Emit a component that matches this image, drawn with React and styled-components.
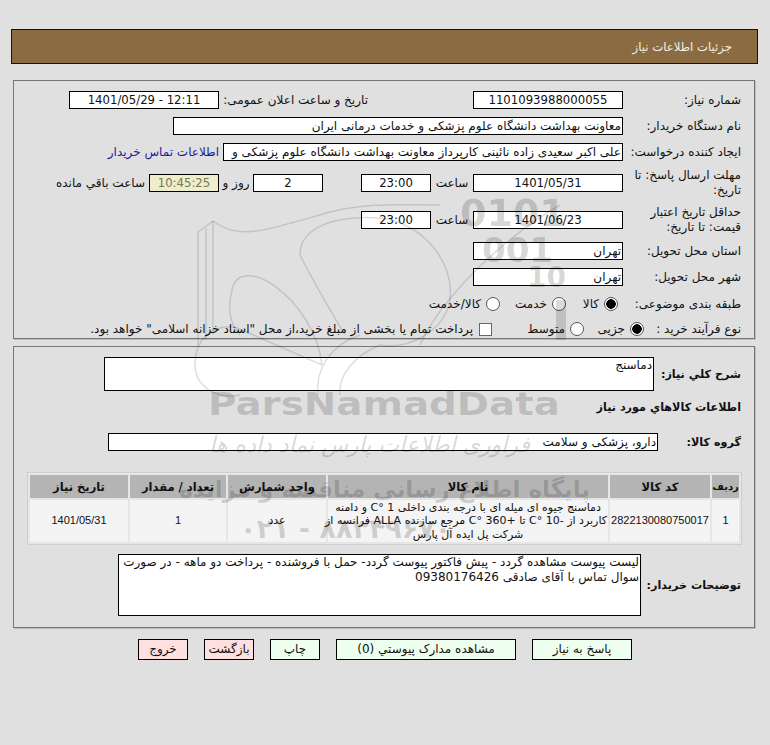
import React from 'react';
import styled, { createGlobalStyle } from 'styled-components';

const GlobalStyle = createGlobalStyle`
  html, body {
    margin: 0;
    background: #e0e0e0;
  }
  body {
    font-family: "DejaVu Sans", sans-serif;
    font-size: 12px;
    color: #111;
  }
`;

const Page = styled.div`
  position: relative;
  width: 770px;
  height: 745px;
  padding: 29px 12px 0 0;
  box-sizing: border-box;
  overflow: hidden;
  direction: rtl;
`;

const Header = styled.div`
  width: 747px;
  height: 35px;
  box-sizing: border-box;
  display: flex;
  align-items: center;
  padding-right: 25px;
  background: #8b6c42;
  border: 1px solid #1a1208;
  color: #f2efe8;
  font-size: 11.7px;
`;

const Panel = styled.div`
  width: 742px;
  height: ${p => p.$h}px;
  margin: ${p => p.$top}px 3px 0 0;
  box-sizing: border-box;
  padding: 10px 13px 0 0;
  border: 1px solid #757575;
  box-shadow: 1px 1px 0 #bdbdbd;
  display: flex;
  flex-direction: column;
`;

const Row = styled.div`
  display: flex;
  align-items: center;
  min-height: 18px;
  margin-top: ${p => p.$top || 0}px;
`;

const Label = styled.div`
  width: ${p => p.$w || 118}px;
  flex: none;
  line-height: 15px;
`;

const BoldLabel = styled(Label)`
  font-weight: 700;
  font-size: 11.2px;
  white-space: nowrap;
`;

const Field = styled.div`
  width: ${p => p.$w}px;
  height: ${p => p.$h || 18}px;
  flex: none;
  box-sizing: border-box;
  margin-right: ${p => p.$mr || 0}px;
  background: ${p => p.$bg || '#fff'};
  border: 1px solid #000;
  color: ${p => p.$color || '#111'};
  text-align: ${p => p.$align || 'center'};
  padding: 0 1px;
  line-height: ${p => (p.$h ? 15 : 16)}px;
  font-size: ${p => (p.$num ? 11.7 : 12)}px;
  white-space: ${p => (p.$wrap ? 'normal' : 'nowrap')};
  overflow: hidden;
`;

const Inline = styled.div`
  width: ${p => p.$w}px;
  flex: none;
  text-align: ${p => p.$align || 'center'};
  margin-right: ${p => p.$mr || 0}px;
  white-space: nowrap;
`;

const BuyerLink = styled.a`
  margin-right: 4px;
  color: #1a1a9c;
  white-space: nowrap;
`;

const Option = styled.div`
  display: flex;
  align-items: center;
  gap: 5px;
  width: ${p => p.$w}px;
  flex: none;
  white-space: nowrap;
`;

const Radio = styled.span`
  width: 14px;
  height: 14px;
  flex: none;
  box-sizing: border-box;
  border-radius: 50%;
  border: 1px solid #555;
  background: ${p => (p.$on ? 'radial-gradient(circle, #000 0 4.5px, #fff 5px)' : '#fff')};
`;

const Check = styled.span`
  width: 13px;
  height: 13px;
  flex: none;
  box-sizing: border-box;
  border: 1px solid #666;
  background: #fff;
  margin-left: 1px;
`;

const Title = styled.div`
  font-weight: 700;
  font-size: 11.2px;
  height: 18px;
  line-height: 18px;
  margin-top: ${p => p.$top}px;
`;

const ItemsTable = styled.table`
  width: 715px;
  margin: ${p => p.$top}px 0 0 0;
  table-layout: fixed;
  border-collapse: separate;
  border-spacing: 2px;
  border: 1px solid #cfcfcf;
  background: #e6e6e6;
  position: relative;
  left: 1px;
`;

const Th = styled.th`
  width: ${p => p.$w}px;
  height: 23px;
  padding: 0;
  background: #b4b4b4;
  font-weight: 700;
  font-size: ${p => p.$size || 11.5}px;
`;

const Td = styled.td`
  height: 42px;
  padding: 0 1px;
  background: #f4f4f4;
  text-align: center;
  line-height: 13.5px;
  font-size: 11px;
  white-space: nowrap;
`;

const NumTd = styled(Td)`
  font-family: "Liberation Sans", sans-serif;
`;

const Buttons = styled.div`
  margin: 11px 126px 0 0;
  display: flex;
  gap: 16px;
`;

const Button = styled.div`
  width: ${p => p.$w}px;
  height: 21px;
  box-sizing: border-box;
  border: 1px solid #000;
  background: ${p => (p.$danger ? '#ffe0e0' : '#efffef')};
  text-align: center;
  line-height: 19px;
`;

const Watermark = styled.svg`
  position: absolute;
  left: 0;
  top: 0;
  pointer-events: none;
  direction: ltr;
`;

const WatermarkText = styled.text`
  fill: #000;
  fill-opacity: 0.17;
  font-family: "DejaVu Sans", sans-serif;
  font-weight: ${p => p.$weight || 700};
  font-size: ${p => p.$size}px;
  font-style: ${p => (p.$italic ? 'italic' : 'normal')};
`;

const Logo = () => (
  <Watermark width="770" height="745" viewBox="0 0 770 745">
    <g fill="none" stroke="#000" strokeOpacity="0.13" strokeWidth="1.5">
      <path d="M213 221 C240 240 260 232 330 212 C370 202 400 205 440 205" />
      <path d="M198 232 L198 345 M206 228 L206 340 M213 221 L213 335" />
      <path d="M198 232 L213 221" />
      <path d="M300 255 C300 225 340 215 380 218 C420 222 455 260 450 300 C445 330 410 350 380 345" />
      <path d="M300 255 C310 275 330 310 345 335" />
      <path d="M322 365 L235 327 C210 325 195 340 195 365 C195 385 215 400 240 395" />
      <path d="M322 365 C315 300 240 250 232 290 C225 315 235 330 240 335" />
      <path d="M360 335 C330 345 315 370 318 395 M380 345 C355 355 338 375 340 395" />
      <path d="M560 205 C500 240 440 300 420 345" />
    </g>
    <WatermarkText x="460" y="226" $size={38}>0101</WatermarkText>
    <WatermarkText x="482" y="262" $size={34}>001</WatermarkText>
    <WatermarkText x="527" y="287" $size={28}>10</WatermarkText>
    <rect x="556" y="300" width="10" height="40" fill="#000" fillOpacity="0.14" />
    <WatermarkText x="208" y="415" $size={32} textLength="352" lengthAdjust="spacingAndGlyphs">ParsNamadData</WatermarkText>
    <WatermarkText x="530" y="452" $size={22} $weight={400} $italic direction="rtl">فراوری اطلاعات پارس نماد داده ها</WatermarkText>
    <WatermarkText x="590" y="497" $size={23} direction="rtl">پایگاه اطلاع رسانی مناقصه و مزایده</WatermarkText>
    <WatermarkText x="240" y="538" $size={27}>۰۲۱ - ۸۸۳۴۹۶۷۰</WatermarkText>
  </Watermark>
);

export default function App() {
  return (
    <Page>
      <GlobalStyle />
      <Header>جزئیات اطلاعات نیاز</Header>

      <Panel $h={259} $top={16}>
        <Row>
          <Label>شماره نیاز:</Label>
          <Field $w={150} $num>1101093988000055</Field>
          <Inline $w={149} $mr={105} $align="right">تاریخ و ساعت اعلان عمومی:</Inline>
          <Field $w={150} $num>12:11 - 1401/05/29</Field>
        </Row>
        <Row $top={8}>
          <Label>نام دستگاه خریدار:</Label>
          <Field $w={450} $align="right">معاونت بهداشت دانشگاه علوم پزشکی و خدمات درمانی ایران</Field>
        </Row>
        <Row $top={8}>
          <Label>ایجاد کننده درخواست:</Label>
          <Field $w={400} $align="right">علی اکبر سعیدی زاده نائینی کارپرداز معاونت بهداشت دانشگاه علوم پزشکی و</Field>
          <BuyerLink>اطلاعات تماس خریدار</BuyerLink>
        </Row>
        <Row $top={11}>
          <Label>مهلت ارسال پاسخ: تا تاریخ:</Label>
          <Field $w={150} $num>1401/05/31</Field>
          <Inline $w={42}>ساعت</Inline>
          <Field $w={70} $num>23:00</Field>
          <Field $w={70} $mr={38} $num>2</Field>
          <Inline $w={34}>روز و</Inline>
          <Field $w={70} $bg="#eeeecc" $color="#77775a" $num>10:45:25</Field>
          <Inline $w={96} $mr={4} $align="right">ساعت باقي مانده</Inline>
        </Row>
        <Row $top={14}>
          <Label>حداقل تاریخ اعتبار قیمت: تا تاریخ:</Label>
          <Field $w={150} $num>1401/06/23</Field>
          <Inline $w={42}>ساعت</Inline>
          <Field $w={70} $num>23:00</Field>
        </Row>
        <Row $top={11}>
          <Label>استان محل تحویل:</Label>
          <Field $w={150} $align="right">تهران</Field>
        </Row>
        <Row $top={8}>
          <Label>شهر محل تحویل:</Label>
          <Field $w={150} $align="right">تهران</Field>
        </Row>
        <Row $top={9}>
          <Label $w={123}>طبقه بندی موضوعی:</Label>
          <Option $w={52}><Radio $on />کالا</Option>
          <Option $w={66}><Radio />خدمت</Option>
          <Option $w={90}><Radio />کالا/خدمت</Option>
        </Row>
        <Row $top={7}>
          <Label $w={97}>نوع فرآیند خرید :</Label>
          <Option $w={60}><Radio $on />جزیی</Option>
          <Option $w={92}><Radio />متوسط</Option>
          <Option $w={400}><Check />پرداخت تمام یا بخشی از مبلغ خرید،از محل "اسناد خزانه اسلامی" خواهد بود.</Option>
        </Row>
      </Panel>

      <Panel $h={282} $top={7}>
        <Row>
          <BoldLabel $w={87}>شرح كلي نياز:</BoldLabel>
          <Field $w={550} $h={34} $align="right">دماسنج</Field>
        </Row>
        <Title $top={8}>اطلاعات كالاهاي مورد نياز</Title>
        <Row $top={16}>
          <BoldLabel $w={83}>گروه كالا:</BoldLabel>
          <Field $w={550} $align="right">دارو، پزشکی و سلامت</Field>
        </Row>
        <ItemsTable $top={21}>
          <thead>
            <tr>
              <Th $w={27} $size={10}>ردیف</Th>
              <Th $w={100}>کد کالا</Th>
              <Th $w={280}>نام کالا</Th>
              <Th $w={98}>واحد شمارش</Th>
              <Th $w={96}>تعداد / مقدار</Th>
              <Th $w={98}>تاریخ نیاز</Th>
            </tr>
          </thead>
          <tbody>
            <tr>
              <NumTd>1</NumTd>
              <NumTd>2822130080750017</NumTd>
              <Td>
                دماسنج جیوه ای میله ای با درجه بندی داخلی 1 °C و دامنه
                <br />
                کاربرد از -10 °C تا +360 °C مرجع سازنده ALLA فرانسه از
                <br />
                شرکت پل ایده آل پارس
              </Td>
              <Td>عدد</Td>
              <NumTd>1</NumTd>
              <NumTd>1401/05/31</NumTd>
            </tr>
          </tbody>
        </ItemsTable>
        <Row $top={9}>
          <BoldLabel $w={100}>توضیحات خریدار:</BoldLabel>
          <Field $w={523} $h={62} $align="right" $wrap>لیست پیوست مشاهده گردد - پیش فاکتور پیوست گردد- حمل با فروشنده - پرداخت دو ماهه - در صورت سوال تماس با آقای صادقی 09380176426</Field>
        </Row>
      </Panel>

      <Buttons>
        <Button $w={100}>پاسخ به نیاز</Button>
        <Button $w={180}>مشاهده مدارک پیوستي (0)</Button>
        <Button $w={50}>چاپ</Button>
        <Button $w={50} $danger>بازگشت</Button>
        <Button $w={50} $danger>خروج</Button>
      </Buttons>

      <Logo />
    </Page>
  );
}
